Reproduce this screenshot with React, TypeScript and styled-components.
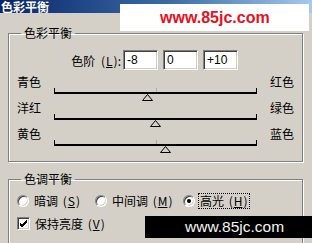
import React from 'react'
import styled, { createGlobalStyle } from 'styled-components'

const GlobalStyle = createGlobalStyle`
  html, body {
    margin: 0;
    padding: 0;
    background: #d4d0c8;
    overflow: hidden;
  }
  body {
    font-family: 'Noto Sans CJK SC', 'Noto Sans', sans-serif;
    font-size: 12px;
    color: #000;
  }
`

const Dialog = styled.div`
  position: relative;
  width: 312px;
  height: 243px;
  background: #d4d0c8;
  overflow: hidden;
`
const TitleBar = styled.div`
  height: 13px;
  padding-left: 1px;
  background: linear-gradient(to right, #0a246a, #3a6ea5 55%, #a6caf0);
  color: #fff;
  font-weight: bold;
  font-size: 12px;
  line-height: 14px;
  white-space: nowrap;
`
const Group = styled.fieldset<{ $top: number }>`
  margin: ${(p) => p.$top}px 9px 0 8px;
  padding: 0;
  min-inline-size: 0;
  border: 1px solid #808080;
  box-shadow: inset 1px 1px 0 #fff, 1px 1px 0 #fff;
`
const Legend = styled.legend`
  margin-left: 12px;
  padding: 0 3px;
  line-height: 14px;
  font-size: 12px;
`
const LevelRow = styled.div`
  display: flex;
  align-items: center;
  justify-content: flex-end;
  gap: 5px;
  margin-top: 10px;
  padding-right: 64px;
  height: 20px;
`
const LevelLabel = styled.span`
  margin-right: -3px;
  white-space: nowrap;
  word-spacing: 3px;
`
const Key = styled.span`
  text-decoration: underline;
  margin: 0 1px;
`
const NumField = styled.input`
  box-sizing: border-box;
  width: 35px;
  height: 20px;
  margin: 0;
  padding: 0 3px;
  font-family: 'Liberation Sans', sans-serif;
  font-size: 12px;
  color: #000;
  background: #fff;
  border: 1px solid;
  border-color: #808080 #fff #fff #808080;
  box-shadow: inset 1px 1px 0 #404040, inset -1px -1px 0 #d4d0c8;
  outline: none;
`
const Sliders = styled.div`
  margin-top: 4px;
  padding-bottom: 9px;
`
const SliderRow = styled.div`
  display: grid;
  grid-template-columns: 37px 203px 1fr;
  height: 26px;
  padding-left: 8px;
  padding-right: 8px;
`
const SideLabel = styled.span<{ $right?: boolean }>`
  line-height: 14px;
  margin-top: 1px;
  text-align: ${(p) => (p.$right ? 'right' : 'left')};
  white-space: nowrap;
`
const Track = styled.div`
  position: relative;
  margin-top: 14px;
  height: 4px;
  border: solid #000;
  border-width: 0 1px 2px 1px;
`
const MidTick = styled.div`
  position: absolute;
  left: 50%;
  top: 0;
  width: 1px;
  height: 100%;
  background: #a8a8a8;
`
const Thumb = styled.svg`
  position: absolute;
  top: calc(100% + 2px);
  width: 11px;
  height: 7px;
  display: block;
`
const OptionRow = styled.div<{ $top: number }>`
  display: flex;
  align-items: center;
  height: 15px;
  margin-top: ${(p) => p.$top}px;
  padding-left: 8px;
`
const Option = styled.label<{ $width?: number }>`
  display: flex;
  align-items: center;
  gap: 5px;
  width: ${(p) => (p.$width ? `${p.$width}px` : 'auto')};
  white-space: nowrap;
`
const OptionText = styled.span<{ $focused?: boolean }>`
  line-height: 14px;
  padding: 0 1px;
  margin-left: -1px;
  word-spacing: 2px;
  outline: ${(p) => (p.$focused ? '1px dotted #000' : 'none')};
`
const Radio = styled.span<{ $on?: boolean }>`
  position: relative;
  box-sizing: border-box;
  width: 12px;
  height: 12px;
  border-radius: 50%;
  background: #fff;
  border: 1px solid;
  border-color: #808080 #fff #fff #808080;
  box-shadow: inset 1px 1px 0 #404040, inset -1px -1px 0 #d4d0c8;
  &::after {
    content: '';
    display: ${(p) => (p.$on ? 'block' : 'none')};
    position: absolute;
    left: 3px;
    top: 3px;
    width: 4px;
    height: 4px;
    border-radius: 50%;
    background: #000;
  }
`
const Check = styled.span`
  box-sizing: border-box;
  width: 13px;
  height: 13px;
  background: #fff;
  border: 1px solid;
  border-color: #808080 #fff #fff #808080;
  box-shadow: inset 1px 1px 0 #404040, inset -1px -1px 0 #d4d0c8;
  display: flex;
  align-items: center;
  justify-content: center;
`
const GroupEnd = styled.div`
  height: 13px;
`
const StampLight = styled.div`
  position: absolute;
  left: 120px;
  top: 4px;
  width: 189px;
  height: 27px;
  background: #fff;
  display: flex;
  align-items: center;
  padding-left: 40px;
  box-sizing: border-box;
  font-family: 'Liberation Sans', Arial, sans-serif;
  font-weight: bold;
  font-size: 16px;
  color: #e8101c;
`
const StampDark = styled.div`
  position: absolute;
  left: 145px;
  top: 216px;
  width: 167px;
  height: 22px;
  background: #000;
  display: flex;
  align-items: center;
  padding-left: 40px;
  box-sizing: border-box;
  font-family: 'Liberation Sans', Arial, sans-serif;
  font-size: 15.5px;
  color: #f4f4f4;
`

const Slider = ({ left, right, value }: { left: string; right: string; value: number }) => (
  <SliderRow>
    <SideLabel>{left}</SideLabel>
    <Track>
      {value !== 0 && <MidTick />}
      <Thumb viewBox="0 0 11 7" style={{ left: `calc(${50 + value / 2}% - 5.5px)` }}>
        <polygon points="5.5,0.5 10.5,6.5 0.5,6.5" fill="#d4d0c8" stroke="#000" strokeWidth="1" />
      </Thumb>
    </Track>
    <SideLabel $right>{right}</SideLabel>
  </SliderRow>
)

const App = () => {
  return (
    <Dialog>
      <GlobalStyle />
      <TitleBar>色彩平衡</TitleBar>
      <Group $top={13}>
        <Legend>色彩平衡</Legend>
        <LevelRow>
          <LevelLabel>
            色阶 (<Key>L</Key>):
          </LevelLabel>
          <NumField readOnly value="-8" />
          <NumField readOnly value="0" />
          <NumField readOnly value="+10" />
        </LevelRow>
        <Sliders>
          <Slider left="青色" right="红色" value={-8} />
          <Slider left="洋红" right="绿色" value={0} />
          <Slider left="黄色" right="蓝色" value={10} />
        </Sliders>
      </Group>
      <Group $top={10}>
        <Legend>色调平衡</Legend>
        <OptionRow $top={7}>
          <Option $width={78}>
            <Radio />
            <OptionText>
              暗调 (<Key>S</Key>)
            </OptionText>
          </Option>
          <Option $width={88}>
            <Radio />
            <OptionText>
              中间调 (<Key>M</Key>)
            </OptionText>
          </Option>
          <Option>
            <Radio $on />
            <OptionText $focused>
              高光 (<Key>H</Key>)
            </OptionText>
          </Option>
        </OptionRow>
        <OptionRow $top={8}>
          <Option>
            <Check>
              <svg width="9" height="9" viewBox="0 0 9 9">
                <path d="M1 4 L3 6 L8 1 M1 5 L3 7 L8 2 M1 6 L3 8 L8 3" stroke="#000" strokeWidth="1" fill="none" />
              </svg>
            </Check>
            <OptionText>
              保持亮度 (<Key>V</Key>)
            </OptionText>
          </Option>
        </OptionRow>
        <GroupEnd />
      </Group>
      <StampLight>www.85jc.com</StampLight>
      <StampDark>www.85jc.com</StampDark>
    </Dialog>
  )
}

export default App
